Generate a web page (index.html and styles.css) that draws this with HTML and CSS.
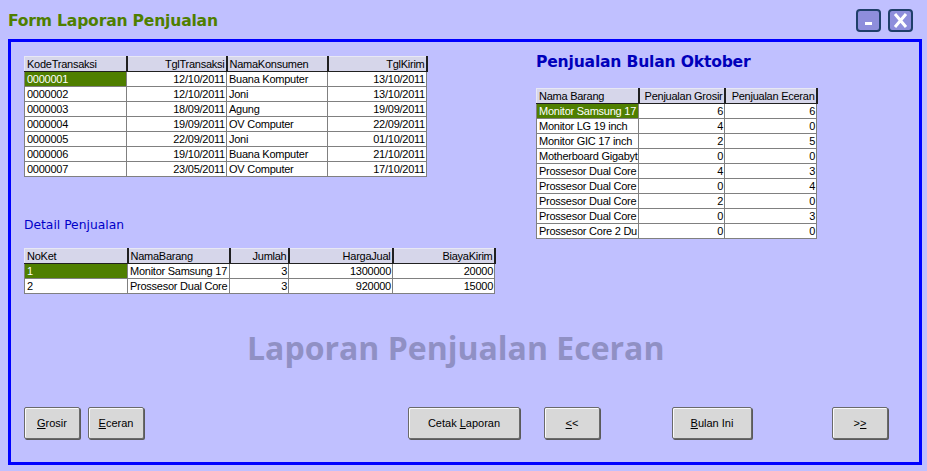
FILE: index.html
```html
<!DOCTYPE html>
<html>
<head>
<meta charset="utf-8">
<link rel="stylesheet" href="styles.css">
</head>
<body>
<div class="titlebar">
  <h1 class="title">Form Laporan Penjualan</h1>
  <div class="winbtns">
    <div class="winbtn"><span class="minus"></span></div>
    <div class="winbtn">
      <svg width="19" height="17" viewBox="0 0 19 17"><path d="M4 2 L15 15 M15 2 L4 15" stroke="#fff" stroke-width="3" fill="none"/></svg>
    </div>
  </div>
</div>
<div class="frame">
  <div class="main">
    <div class="left">
      <table class="grid t1">
        <colgroup><col style="width:102px"><col style="width:100px"><col style="width:101px"><col style="width:99px"></colgroup>
        <tr class="hd"><th>KodeTransaksi</th><th class="r">TglTransaksi</th><th>NamaKonsumen</th><th class="r">TglKirim</th></tr>
        <tr><td class="sel">0000001</td><td class="r">12/10/2011</td><td>Buana Komputer</td><td class="r">13/10/2011</td></tr>
        <tr><td>0000002</td><td class="r">12/10/2011</td><td>Joni</td><td class="r">13/10/2011</td></tr>
        <tr><td>0000003</td><td class="r">18/09/2011</td><td>Agung</td><td class="r">19/09/2011</td></tr>
        <tr><td>0000004</td><td class="r">19/09/2011</td><td>OV Computer</td><td class="r">22/09/2011</td></tr>
        <tr><td>0000005</td><td class="r">22/09/2011</td><td>Joni</td><td class="r">01/10/2011</td></tr>
        <tr><td>0000006</td><td class="r">19/10/2011</td><td>Buana Komputer</td><td class="r">21/10/2011</td></tr>
        <tr><td>0000007</td><td class="r">23/05/2011</td><td>OV Computer</td><td class="r">17/10/2011</td></tr>
      </table>
      <div class="detail-label">Detail Penjualan</div>
      <table class="grid t3">
        <colgroup><col style="width:103px"><col style="width:102px"><col style="width:59px"><col style="width:104px"><col style="width:102px"></colgroup>
        <tr class="hd"><th>NoKet</th><th>NamaBarang</th><th class="r">Jumlah</th><th class="r">HargaJual</th><th class="r">BiayaKirim</th></tr>
        <tr><td class="sel">1</td><td>Monitor Samsung 17</td><td class="r">3</td><td class="r">1300000</td><td class="r">20000</td></tr>
        <tr><td>2</td><td>Prossesor Dual Core</td><td class="r">3</td><td class="r">920000</td><td class="r">15000</td></tr>
      </table>
    </div>
    <div class="right">
      <h2 class="month-title">Penjualan Bulan Oktober</h2>
      <table class="grid t2">
        <colgroup><col style="width:102px"><col style="width:86px"><col style="width:92px"></colgroup>
        <tr class="hd"><th>Nama Barang</th><th class="r">Penjualan Grosir</th><th class="r">Penjualan Eceran</th></tr>
        <tr><td class="sel">Monitor Samsung 17</td><td class="r">6</td><td class="r">6</td></tr>
        <tr><td>Monitor LG 19 inch</td><td class="r">4</td><td class="r">0</td></tr>
        <tr><td>Monitor GIC 17 inch</td><td class="r">2</td><td class="r">5</td></tr>
        <tr><td>Motherboard Gigabyt</td><td class="r">0</td><td class="r">0</td></tr>
        <tr><td>Prossesor Dual Core</td><td class="r">4</td><td class="r">3</td></tr>
        <tr><td>Prossesor Dual Core</td><td class="r">0</td><td class="r">4</td></tr>
        <tr><td>Prossesor Dual Core</td><td class="r">2</td><td class="r">0</td></tr>
        <tr><td>Prossesor Dual Core</td><td class="r">0</td><td class="r">3</td></tr>
        <tr><td>Prossesor Core 2 Du</td><td class="r">0</td><td class="r">0</td></tr>
      </table>
    </div>
  </div>
  <div class="watermark">Laporan Penjualan Eceran</div>
  <div class="buttons">
    <button class="btn w56"><u>G</u>rosir</button>
    <button class="btn w56 g8"><u>E</u>ceran</button>
    <button class="btn w112 g264">Cetak <u>L</u>aporan</button>
    <button class="btn w56 g24"><u>&lt;</u>&lt;</button>
    <button class="btn w80 g72"><u>B</u>ulan Ini</button>
    <button class="btn w56 g80">&gt;<u>&gt;</u></button>
  </div>
</div>
</body>
</html>
```

FILE: styles.css
```css
html, body {
  margin: 0;
  padding: 0;
}
body {
  width: 927px;
  height: 471px;
  overflow: hidden;
  background: #C0C0FF;
  font-family: "Liberation Sans", Arial, sans-serif;
  font-size: 11px;
  color: #000;
}
.titlebar {
  display: flex;
  align-items: flex-start;
  height: 39px;
  padding-left: 8px;
}
.title {
  margin: 0;
  padding-top: 12px;
  font-family: "DejaVu Sans", Verdana, sans-serif;
  font-weight: bold;
  font-size: 15.6px;
  line-height: 18px;
  color: #4F7F00;
  letter-spacing: -0.2px;
}
.winbtns {
  margin-left: auto;
  display: flex;
  gap: 7px;
  padding: 9px 14px 0 0;
}
.winbtn {
  width: 21px;
  height: 19px;
  border: 2px solid #1F3F6A;
  border-radius: 4px;
  background: #8E8EDC;
  display: flex;
  align-items: center;
  justify-content: center;
}
.minus {
  display: block;
  width: 7px;
  height: 3px;
  background: #fff;
  margin-top: 5px;
}
.frame {
  margin-left: 8px;
  width: 914px;
  height: 426px;
  box-sizing: border-box;
  border: 3px solid #0000FF;
  padding: 10px 0 0 13px;
}
.main {
  display: flex;
  height: 278px;
}
.left {
  width: 512px;
  padding-top: 4px;
}
.right {
  width: 300px;
}
.grid {
  border-collapse: collapse;
  table-layout: fixed;
}
.grid th, .grid td {
  height: 15px;
  padding: 0 1px 0 2px;
  line-height: 13px;
  font-weight: normal;
  text-align: left;
  white-space: nowrap;
  overflow: hidden;
  border: 1px solid #808080;
  box-sizing: border-box;
  letter-spacing: -0.25px;
}
.grid td {
  background: #fff;
}
.grid th {
  background: #D6D6EA;
  border-top: 1px solid #E8E8F4;
  border-left: 1px solid #E8E8F4;
  border-bottom: 1px solid #202020;
  border-right: 2px solid #202020;
}
.grid .r {
  text-align: right;
}
.grid td.sel {
  background: #4F7F00;
  color: #fff;
}
.t1 { width: 402px; }
.t2 { width: 280px; }
.t3 { width: 470px; }
.detail-label {
  margin-top: 40px;
  height: 16px;
  line-height: 16px;
  font-family: "DejaVu Sans", Verdana, sans-serif;
  font-size: 12.3px;
  color: #0000C8;
}
.t3 { margin-top: 15px; }
.month-title {
  margin: 0 0 16px 0;
  height: 20px;
  line-height: 20px;
  font-family: "DejaVu Sans", Verdana, sans-serif;
  font-weight: bold;
  font-size: 15.6px;
  color: #0000BB;
  letter-spacing: -0.2px;
}
.watermark {
  margin-left: 223px;
  height: 36px;
  line-height: 36px;
  font-family: "Open Sans", sans-serif;
  font-weight: bold;
  font-size: 32px;
  color: #9090C4;
}
.buttons {
  display: flex;
  margin-top: 41px;
}
.btn {
  height: 32px;
  box-sizing: border-box;
  background: #D8D8D8;
  border: 1px solid #6A6A6A;
  border-radius: 2px;
  box-shadow: inset 1px 1px 0 #FAFAFA, 1px 1px 0 #5A5A5A;
  font-family: "Liberation Sans", Arial, sans-serif;
  font-size: 11px;
  color: #000;
  padding: 0;
}
.w56 { width: 56px; }
.w80 { width: 80px; }
.w112 { width: 112px; }
.g8 { margin-left: 8px; }
.g24 { margin-left: 24px; }
.g72 { margin-left: 72px; }
.g80 { margin-left: 80px; }
.g264 { margin-left: 264px; }
```
